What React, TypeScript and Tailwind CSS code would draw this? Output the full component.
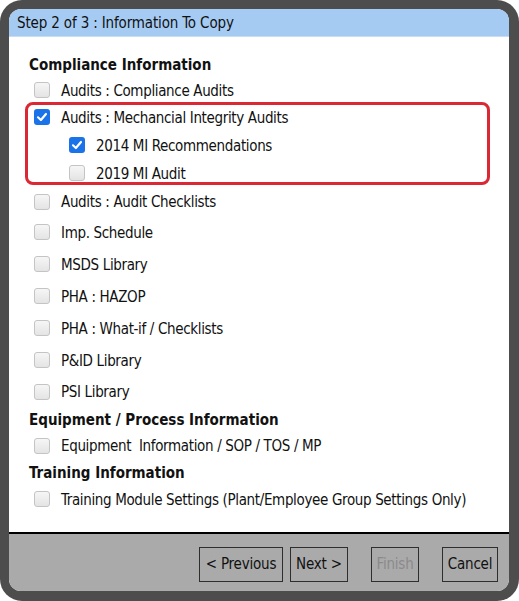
import React from "react";

const font = { fontFamily: '"DejaVu Sans Condensed", "DejaVu Sans", sans-serif' };

function Box({ checked }: { checked?: boolean }) {
  if (checked) {
    return (
      <span className="flex h-[16px] w-[16px] shrink-0 items-center justify-center rounded-[3px] bg-[#1a73e8]">
        <svg width="12" height="12" viewBox="0 0 12 12">
          <path d="M2 6.3 L4.9 9 L10 3" fill="none" stroke="white" strokeWidth="2.2" strokeLinecap="round" strokeLinejoin="round" />
        </svg>
      </span>
    );
  }
  return (
    <span className="block h-[16px] w-[16px] shrink-0 rounded-[3px] border border-[#c4c4c4] bg-gradient-to-b from-[#f6f6f6] to-[#e4e4e4]" />
  );
}

function Item({ label, h, checked, nested }: { label: string; h: string; checked?: boolean; nested?: boolean }) {
  return (
    <div className={`flex items-center ${h} ${nested ? "pl-[60px]" : "pl-[25px]"}`}>
      <Box checked={checked} />
      <span className="ml-[11px] pt-[2px] text-[15px] tracking-[-0.35px] text-[#111] whitespace-pre">{label}</span>
    </div>
  );
}

function Heading({ label, h }: { label: string; h: string }) {
  return (
    <div className={`flex items-center pl-[20px] pt-[1px] ${h} text-[15px] font-bold text-[#111]`}>{label}</div>
  );
}

export default function App() {
  return (
    <div style={font} className="h-[601px] w-[519px] bg-white">
      <div className="flex h-[601px] w-[519px] flex-col rounded-[22px] bg-[#4d4d4d] pb-[10px] pl-[9px] pr-[10px] pt-[9px]">
        <div className="flex flex-1 flex-col overflow-hidden rounded-[12px] bg-white">
          <div className="flex h-[28px] shrink-0 items-center border-b border-[#c8dcf2] bg-[#a6cbf3] pl-[8px] pt-[1px] text-[15px] tracking-[-0.15px] text-[#111]">
            Step 2 of 3 : Information To Copy
          </div>
          <div className="relative flex-1 pt-[16px]">
            <Heading label="Compliance Information" h="h-[24px]" />
            <Item label="Audits : Compliance Audits" h="h-[26px]" />
            <Item label="Audits : Mechancial Integrity Audits" h="h-[28px]" checked />
            <Item label="2014 MI Recommendations" h="h-[28px]" checked nested />
            <Item label="2019 MI Audit" h="h-[28px]" nested />
            <Item label="Audits : Audit Checklists" h="h-[29px]" />
            <Item label="Imp. Schedule" h="h-[32px]" />
            <Item label="MSDS Library" h="h-[32px]" />
            <Item label="PHA : HAZOP" h="h-[32px]" />
            <Item label="PHA : What-if / Checklists" h="h-[32px]" />
            <Item label="P&ID Library" h="h-[32px]" />
            <Item label="PSI Library" h="h-[31px]" />
            <Heading label="Equipment / Process Information" h="h-[25px]" />
            <Item label="Equipment  Information / SOP / TOS / MP" h="h-[27px]" />
            <Heading label="Training Information" h="h-[27px]" />
            <Item label="Training Module Settings (Plant/Employee Group Settings Only)" h="h-[26px]" />
            <div className="pointer-events-none absolute left-[16px] top-[65px] h-[83px] w-[465px] rounded-[8px] border-[3px] border-[#dc2835]" />
          </div>
          <div className="flex h-[59px] shrink-0 items-start border-t-2 border-black bg-[#aaaaaa] pr-[11px] pt-[13px]">
            <div className="ml-auto flex text-[15px] tracking-[-0.2px]">
              <button className="h-[35px] w-[84px] border border-[#2e2e2e] text-[#111]">&lt; Previous</button>
              <button className="ml-[7px] h-[35px] w-[58px] border border-[#2e2e2e] text-[#111]">Next &gt;</button>
              <button className="ml-[23px] h-[35px] w-[48px] border border-[#2e2e2e] text-[#8a8a8a]">Finish</button>
              <button className="ml-[23px] h-[35px] w-[56px] border border-[#2e2e2e] text-[#111]">Cancel</button>
            </div>
          </div>
        </div>
      </div>
    </div>
  );
}
